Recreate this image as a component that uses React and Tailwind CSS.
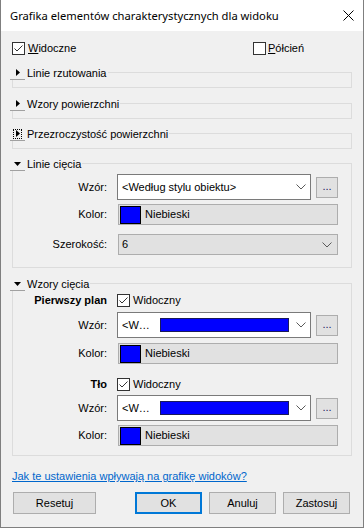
import React from 'react'

const Check = ({ checked }) => (
  <span className="w-[13px] h-[13px] shrink-0 bg-white border border-[#333333] flex items-center justify-center">
    {checked && (
      <svg width="11" height="11" viewBox="0 0 11 11" fill="none" stroke="#333333" strokeWidth="1">
        <path d="M1.5 5.5L4 8L9.5 2.5" />
      </svg>
    )}
  </span>
)

const Chevron = () => (
  <svg width="10" height="6" viewBox="0 0 10 6" fill="none" stroke="#5a5a5a" strokeWidth="1" className="shrink-0">
    <path d="M0.5 0.5L5 5L9.5 0.5" />
  </svg>
)

const Toggle = ({ open, focused }) => (
  <span className="w-[15px] h-[13px] shrink-0 border-b border-[#a0a0a0] flex items-center justify-center">
    <span className={focused ? 'w-[9px] h-[10px] border border-dotted border-black flex items-center justify-center' : 'flex items-center justify-center'}>
      {open ? (
        <svg width="7" height="4" viewBox="0 0 7 4"><path d="M0 0H7L3.5 4Z" fill="black" /></svg>
      ) : (
        <svg width="4" height="7" viewBox="0 0 4 7"><path d="M0 0V7L4 3.5Z" fill="black" /></svg>
      )}
    </span>
  </span>
)

function Group({ title, open, focused, className = '', children }) {
  return (
    <div className={`border border-[#dcdcdc] ${open ? '' : 'pb-[7px]'} ${className}`}>
      <div className="-mt-[7px] -ml-[3px] h-[14px] w-fit bg-[#f0f0f0] pr-[1px] flex items-center">
        <Toggle open={open} focused={focused} />
        <span className="ml-[2px]">{title}</span>
      </div>
      {children}
    </div>
  )
}

const Label = ({ children, bold }) => (
  <span className={`w-[94px] shrink-0 text-right ${bold ? 'font-bold' : ''}`}>{children}</span>
)

const Dots = () => (
  <button className="ml-[5px] w-[22px] h-[21px] bg-[#e1e1e1] border border-[#adadad] flex items-center justify-center text-[11px] leading-none pb-[1px] text-[#202060]">
    ...
  </button>
)

function PatternRow({ children }) {
  return (
    <div className="flex items-center">
      <Label>Wzór:</Label>
      <div className="ml-[10px] w-[194px] h-[26px] bg-white border border-[#7a7a7a] flex items-center pl-[4px] pr-[4px]">
        <div className="flex-1 flex items-center">{children}</div>
        <Chevron />
      </div>
      <Dots />
    </div>
  )
}

function ColorRow({ className = '' }) {
  return (
    <div className={`flex items-center ${className}`}>
      <Label>Kolor:</Label>
      <div className="ml-[11px] w-[220px] h-[21px] bg-[#e1e1e1] border border-[#adadad] flex items-center pl-[1px]">
        <span className="w-[21px] h-[18px] bg-[#0000ff] border border-black" />
        <span className="ml-[4px]">Niebieski</span>
      </div>
    </div>
  )
}

function LayerRow({ title, className = '' }) {
  return (
    <div className={`h-[13px] flex items-center ${className}`}>
      <Label bold>{title}</Label>
      <span className="ml-[10px]"><Check checked /></span>
      <span className="ml-[3px]">Widoczny</span>
    </div>
  )
}

const BluePattern = () => (
  <>
    <span className="w-[38px]">&lt;W…</span>
    <span className="w-[129px] h-[14px] bg-[#0000ff] border border-[#1a1a5a]" />
  </>
)

const Btn = ({ children, primary, className = '' }) => (
  <button className={`h-[22px] bg-[#e1e1e1] flex items-center justify-center ${primary ? 'border-2 border-[#0078d7]' : 'border border-[#adadad]'} ${className}`}>
    {children}
  </button>
)

export default function App() {
  return (
    <div className="w-[364px] h-[528px] bg-[#f0f0f0] border-x border-b border-[#7f7f7f] flex flex-col text-[11px] text-black font-['Liberation_Sans',Arial,sans-serif] leading-[13px]">
      {/* Title bar */}
      <div className="h-[31px] shrink-0 bg-white flex items-center justify-between pl-[9px] pr-[9px]">
        <span className="text-[11.2px] font-['Noto_Sans',sans-serif]">Grafika elementów charakterystycznych dla widoku</span>
        <svg width="11" height="11" viewBox="0 0 11 11" stroke="black" strokeWidth="1">
          <path d="M0.5 0.5L10.5 10.5M10.5 0.5L0.5 10.5" />
        </svg>
      </div>

      <div className="flex flex-col px-[11px] pt-[11px]">
        <div className="h-[13px] flex items-center">
          <div className="w-[241px] flex items-center">
            <Check checked />
            <span className="ml-[3px]"><span className="underline">W</span>idoczne</span>
          </div>
          <div className="flex items-center">
            <Check />
            <span className="ml-[2px]"><span className="underline">P</span>ółcień</span>
          </div>
        </div>

        <Group title="Linie rzutowania" className="mt-[17px]" />
        <Group title="Wzory powierzchni" className="mt-[15px]" />
        <Group title="Przezroczystość powierzchni" focused className="mt-[14px]" />

        <Group title="Linie cięcia" open className="mt-[14px] pr-[13px] pb-[12px]">
          <div className="mt-[3px]">
            <PatternRow>
              <span>&lt;Według stylu obiektu&gt;</span>
            </PatternRow>
          </div>
          <ColorRow className="mt-[4px]" />
          <div className="mt-[9px] flex items-center">
            <Label>Szerokość:</Label>
            <div className="ml-[11px] w-[220px] h-[21px] bg-[#e1e1e1] border border-[#adadad] flex items-center pl-[3px] pr-[5px]">
              <span className="flex-1">6</span>
              <Chevron />
            </div>
          </div>
        </Group>

        <Group title="Wzory cięcia" open className="mt-[15px] pr-[13px] pb-[9px]">
          <LayerRow title="Pierwszy plan" className="mt-[3px]" />
          <div className="mt-[5px]">
            <PatternRow><BluePattern /></PatternRow>
          </div>
          <ColorRow className="mt-[5px]" />
          <LayerRow title="Tło" className="mt-[14px]" />
          <div className="mt-[4px]">
            <PatternRow><BluePattern /></PatternRow>
          </div>
          <ColorRow className="mt-[4px]" />
        </Group>

        <a className="mt-[14px] h-[13px] text-[#0066cc] underline w-fit">Jak te ustawienia wpływają na grafikę widoków?</a>

        <div className="mt-[9px] flex items-center">
          <Btn className="ml-[1px] w-[83px]">Resetuj</Btn>
          <div className="ml-auto mr-[2px] flex gap-[7px]">
            <Btn primary className="w-[67px]">OK</Btn>
            <Btn className="w-[67px]">Anuluj</Btn>
            <Btn className="w-[67px]">Zastosuj</Btn>
          </div>
        </div>
      </div>
    </div>
  )
}
